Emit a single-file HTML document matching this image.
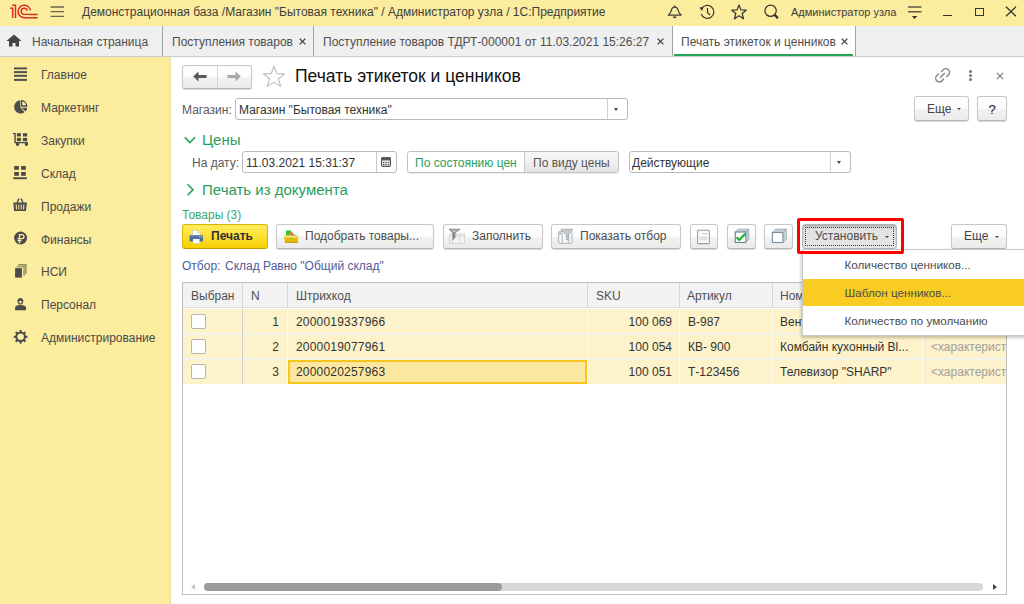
<!DOCTYPE html>
<html><head><meta charset="utf-8">
<style>
*{box-sizing:border-box;margin:0;padding:0}
html,body{width:1024px;height:604px;overflow:hidden;background:#fff;font-family:"Liberation Sans",sans-serif;font-size:12px;color:#4d4d4d;position:relative}
.a{position:absolute}
.t{position:absolute;white-space:nowrap;line-height:14px;font-size:12px}
#titlebar{left:0;top:0;width:1024px;height:26px;background:#fbec9e}
#tabbar{left:0;top:26px;width:1024px;height:31px;background:#efefef;border-bottom:1px solid #c9c9c9}
.tabsep{position:absolute;top:26px;width:1px;height:30px;background:#a3a3a3}
#side{left:0;top:57px;width:171px;height:547px;background:#fbec9e;border-right:1px solid #ece0a0}
.btn{position:absolute;height:24px;border:1px solid #c8c8c8;border-bottom-color:#b4b4b4;border-radius:3px;background:linear-gradient(#ffffff,#fcfcfc 50%,#f1f1f1 54%,#ebebeb);box-shadow:0 1px 1px rgba(0,0,0,.16)}
.inp{position:absolute;height:21px;border:1px solid #b9b9b9;border-radius:3px;background:#fff}
.dd{position:absolute;top:0;width:0;height:0;border-left:3.5px solid transparent;border-right:3.5px solid transparent;border-top:4px solid #444}
.green{color:#2e9e5e}
</style></head><body>

<!-- TITLE BAR -->
<div id="titlebar" class="a"></div>
<svg class="a" style="left:0;top:0" width="44" height="22" viewBox="0 0 44 22">
  <g fill="none" stroke="#dd2a26" stroke-width="1.45">
    <path d="M10.1 8.3 H12.7 V17.9"/>
    <path d="M12.1 5.2 H15.5 V17.9"/>
    <path d="M30.4 10.4 A6.2 6.2 0 1 0 24.3 17.7 H37.6"/>
    <path d="M27.3 10.6 A3.1 3.1 0 1 0 24.3 14.4 H37.6"/>
  </g>
</svg>
<svg class="a" style="left:50px;top:5px" width="15" height="14" viewBox="0 0 15 14">
  <g stroke="#6b6650" stroke-width="1.3"><path d="M0.5 2H14M0.5 6.7H14M0.5 11.4H14"/></g>
</svg>
<div class="t" style="left:82px;top:5px;color:#3e3e3e">Демонстрационная база /Магазин "Бытовая техника" / Администратор узла / 1С:Предприятие</div>

<!-- bell -->
<svg class="a" style="left:664px;top:2px" width="20" height="20" viewBox="0 0 20 20">
  <path d="M4.3 13.1 H17.2 C15.6 11.6 14.6 10.6 14.2 8.6 C13.8 6.2 12.8 5.1 10.75 5.1 C8.7 5.1 7.7 6.2 7.3 8.6 C6.9 10.6 5.9 11.6 4.3 13.1 Z" fill="none" stroke="#3a3a3a" stroke-width="1.15" stroke-linejoin="round"/>
  <path d="M10.75 2.7 L11.8 4.7 H9.7 Z" fill="#3a3a3a"/>
  <path d="M8.7 14.6 H12.8 A2.05 1.7 0 0 1 8.7 14.6 Z" fill="#3a3a3a"/>
</svg>
<!-- history -->
<svg class="a" style="left:699px;top:4px" width="17" height="16" viewBox="0 0 17 16">
  <g fill="none" stroke="#333" stroke-width="1.2"><path d="M2.5 5 A6.5 6.5 0 1 1 2.2 10"/><path d="M8.5 4 V8.5 L11 11"/></g>
  <path d="M0.5 3.5 L4.5 3 L3 7Z" fill="#333"/>
</svg>
<!-- star -->
<svg class="a" style="left:731px;top:4px" width="16" height="16" viewBox="0 0 16 16">
  <path d="M8 1 L10 6 L15.2 6.2 L11.2 9.5 L12.5 14.8 L8 11.8 L3.5 14.8 L4.8 9.5 L0.8 6.2 L6 6Z" fill="none" stroke="#333" stroke-width="1.2" stroke-linejoin="round"/>
</svg>
<!-- search -->
<svg class="a" style="left:763px;top:4px" width="16" height="16" viewBox="0 0 16 16">
  <circle cx="7.6" cy="6.75" r="5.7" fill="none" stroke="#333" stroke-width="1.2"/>
  <path d="M11.9 11 L14.3 13.6" stroke="#333" stroke-width="2.3" stroke-linecap="round"/>
</svg>
<div class="t" style="left:791px;top:4.5px;font-size:11px;color:#3e3e3e">Администратор узла</div>
<!-- filter menu -->
<svg class="a" style="left:902px;top:2px" width="26" height="20" viewBox="0 0 26 20">
  <g stroke="#5d5a48" stroke-width="1.5"><path d="M6 5.1H19.5M6 9.8H19.5"/></g>
  <path d="M9.9 14 H15.3 L12.6 16.9Z" fill="#333"/>
</svg>
<div class="a" style="left:943px;top:14.5px;width:9px;height:1.3px;background:#333"></div>
<div class="a" style="left:975px;top:7.5px;width:9px;height:8.5px;border:1.2px solid #333"></div>
<svg class="a" style="left:1005px;top:6px" width="12" height="11" viewBox="0 0 12 11">
  <path d="M1 0.8 L11 10.2 M11 0.8 L1 10.2" stroke="#333" stroke-width="1.2"/>
</svg>

<!-- TAB BAR -->
<div id="tabbar" class="a"></div>
<div class="a" style="left:672px;top:26px;width:183px;height:30px;background:#fff"></div>
<div class="a" style="left:674px;top:54px;width:179px;height:2px;background:#27a35a"></div>
<div class="tabsep" style="left:162px"></div>
<div class="tabsep" style="left:313px"></div>
<div class="tabsep" style="left:672px"></div>
<div class="tabsep" style="left:855px"></div>
<svg class="a" style="left:6px;top:34px" width="16" height="13" viewBox="0 0 16 13">
  <path d="M8 0.5 L15.5 7 H13 V12.5 H9.5 V9 H6.5 V12.5 H3 V7 H0.5Z" fill="#444"/>
</svg>
<div class="t" style="left:32px;top:35px">Начальная страница</div>
<div class="t" style="left:172px;top:35px">Поступления товаров</div>
<svg class="a" style="left:299.1px;top:37.7px" width="7" height="7" viewBox="0 0 7 7"><path d="M0.6 0.6 L6.4 6.4 M6.4 0.6 L0.6 6.4" stroke="#404040" stroke-width="1.3"/></svg>
<div class="t" style="left:323px;top:35px">Поступление товаров ТДРТ-000001 от 11.03.2021 15:26:27</div>
<svg class="a" style="left:656.5px;top:37.7px" width="7" height="7" viewBox="0 0 7 7"><path d="M0.6 0.6 L6.4 6.4 M6.4 0.6 L0.6 6.4" stroke="#404040" stroke-width="1.3"/></svg>
<div class="t" style="left:681px;top:35px">Печать этикеток и ценников</div>
<svg class="a" style="left:841.0px;top:37.7px" width="7" height="7" viewBox="0 0 7 7"><path d="M0.6 0.6 L6.4 6.4 M6.4 0.6 L0.6 6.4" stroke="#404040" stroke-width="1.3"/></svg>

<!-- SIDEBAR -->
<div id="side" class="a"></div>
<div id="sideitems">
<svg class="a" style="left:10px;top:62px" width="22" height="22" viewBox="0 0 22 22"><g fill="#505050"><rect x="4" y="5.4" width="13" height="2"/><rect x="4" y="9.1" width="13" height="2"/><rect x="4" y="12.8" width="13" height="2"/><rect x="4" y="16.9" width="13" height="2"/></g></svg>
<div class="t" style="left:41px;top:68px;color:#4a4a4a">Главное</div>
<svg class="a" style="left:10px;top:96px" width="22" height="22" viewBox="0 0 22 22"><path d="M10.3 11.2 V4.3 A6.6 6.6 0 1 0 14.6 16.2 Z" fill="#4e4e4e"/><path d="M11.5 11.8 L15.6 15.6 A6.2 6.2 0 0 0 17.2 11.8 Z" fill="#4e4e4e"/><path d="M11.6 4.6 V10.0 H16.7 A5.6 5.6 0 0 0 11.6 4.6 Z" fill="none" stroke="#4e4e4e" stroke-width="1.3"/></svg>
<div class="t" style="left:41px;top:101px;color:#4a4a4a">Маркетинг</div>
<svg class="a" style="left:10px;top:129px" width="22" height="22" viewBox="0 0 22 22"><g fill="#4a4a4a"><path d="M3 3.9 H5.8 V12.9 H18 V14.3 H4.4 V5.3 H3Z"/><rect x="6.9" y="4.2" width="4" height="3.3"/><rect x="12.9" y="4.2" width="4.2" height="3.3"/><rect x="6.9" y="8.9" width="4" height="3.3"/><rect x="12.9" y="8.9" width="4.2" height="3.3"/><path d="M6 14 H9.1 V15.8 A1.55 1.2 0 0 1 6 15.8Z"/><path d="M14.9 14 H18 V15.8 A1.55 1.2 0 0 1 14.9 15.8Z"/></g></svg>
<div class="t" style="left:41px;top:134px;color:#4a4a4a">Закупки</div>
<svg class="a" style="left:10px;top:162px" width="22" height="22" viewBox="0 0 22 22"><g fill="#4a4a4a"><rect x="4.2" y="4" width="4.7" height="3.8"/><rect x="11.1" y="4" width="4.7" height="3.8"/><rect x="4.2" y="10" width="4.7" height="3.8"/><rect x="11.1" y="10" width="4.7" height="3.8"/><rect x="3.2" y="15.3" width="13.7" height="1.9"/></g></svg>
<div class="t" style="left:41px;top:167px;color:#4a4a4a">Склад</div>
<svg class="a" style="left:10px;top:195px" width="22" height="22" viewBox="0 0 22 22"><path d="M3.3 7.6 H16.9 L16 16 H4.1Z M5.6 9.4 L6 14.5 H7 L6.8 9.4Z M8.3 9.4 V14.5 H9.3 V9.4Z M10.8 9.4 V14.5 H11.8 V9.4Z M13.3 9.4 L13.1 14.5 H14.1 L14.5 9.4Z" fill="#4a4a4a" fill-rule="evenodd"/><path d="M7 7.8 L9 3.6 M13 7.8 L11.1 3.6" stroke="#4a4a4a" stroke-width="1.4"/></svg>
<div class="t" style="left:41px;top:200px;color:#4a4a4a">Продажи</div>
<svg class="a" style="left:10px;top:228px" width="22" height="22" viewBox="0 0 22 22"><circle cx="10.6" cy="10" r="6.5" fill="#4a4a4a"/><path d="M9.5 15.3 V6.6 H12 A2 2 0 0 1 12 10.6 H7.5 M7.5 12.6 H11.5" fill="none" stroke="#fbec9e" stroke-width="1.3"/></svg>
<div class="t" style="left:41px;top:233px;color:#4a4a4a">Финансы</div>
<svg class="a" style="left:10px;top:261px" width="22" height="22" viewBox="0 0 22 22"><g fill="#8d8762"><path d="M8.3 3.1 H16.6 V12.7 H15.2 V4.5 H8.3Z"/><path d="M6.7 4.9 H14.8 V14.8 H13.3 V6.3 H6.7Z" fill="#9a9468"/></g><rect x="5.1" y="7.1" width="6.8" height="9.5" fill="#4a4a4a"/></svg>
<div class="t" style="left:41px;top:265px;color:#4a4a4a">НСИ</div>
<svg class="a" style="left:10px;top:294px" width="22" height="22" viewBox="0 0 22 22"><path d="M7.6 6.3 A2.9 3 0 0 1 13.2 6.3 V7.5 C13.2 9.5 12 10.6 10.4 10.6 C8.8 10.6 7.6 9.5 7.6 7.5Z" fill="#4a4a4a"/><path d="M9 7.2 Q10.4 6.3 11.8 7.2 Q11.6 9.5 10.4 9.5 Q9.2 9.5 9 7.2Z" fill="#fbec9e"/><path d="M5.1 13.3 Q5.3 11 10.5 10.9 Q15.8 11 16 13.3 V16.2 H5.1Z" fill="#4a4a4a"/></svg>
<div class="t" style="left:41px;top:298px;color:#4a4a4a">Персонал</div>
<svg class="a" style="left:10px;top:327px" width="22" height="22" viewBox="0 0 22 22"><g transform="translate(10.6 9.8)"><circle r="4.3" fill="none" stroke="#4a4a4a" stroke-width="2"/><rect x="-1" y="-6.9" width="2" height="3" rx="0.6" fill="#4a4a4a" transform="rotate(0)"/><rect x="-1" y="-6.9" width="2" height="3" rx="0.6" fill="#4a4a4a" transform="rotate(45)"/><rect x="-1" y="-6.9" width="2" height="3" rx="0.6" fill="#4a4a4a" transform="rotate(90)"/><rect x="-1" y="-6.9" width="2" height="3" rx="0.6" fill="#4a4a4a" transform="rotate(135)"/><rect x="-1" y="-6.9" width="2" height="3" rx="0.6" fill="#4a4a4a" transform="rotate(180)"/><rect x="-1" y="-6.9" width="2" height="3" rx="0.6" fill="#4a4a4a" transform="rotate(225)"/><rect x="-1" y="-6.9" width="2" height="3" rx="0.6" fill="#4a4a4a" transform="rotate(270)"/><rect x="-1" y="-6.9" width="2" height="3" rx="0.6" fill="#4a4a4a" transform="rotate(315)"/></g></svg>
<div class="t" style="left:41px;top:331px;color:#4a4a4a">Администрирование</div>
</div>

<!-- FORM -->
<div id="form">
<!-- nav buttons -->
<div class="btn" style="left:182px;top:65px;width:70px;height:24px"></div>
<div class="a" style="left:217px;top:66px;width:1px;height:22px;background:#d4d4d4"></div>
<svg class="a" style="left:192px;top:70px" width="16" height="13" viewBox="0 0 16 13">
  <path d="M1.2 6.5 L6.5 1.5 V4.9 H14.6 V8.1 H6.5 V11.5Z" fill="#585858"/>
</svg>
<svg class="a" style="left:226px;top:70px" width="16" height="13" viewBox="0 0 16 13">
  <path d="M14.8 6.5 L9.5 1.5 V4.9 H1.4 V8.1 H9.5 V11.5Z" fill="#a8a8a8"/>
</svg>
<svg class="a" style="left:262px;top:65px" width="24" height="23" viewBox="0 0 24 23">
  <path d="M12 1.3 L14.8 8.6 L22.6 8.9 L16.5 13.8 L18.6 21.4 L12 17.1 L5.4 21.4 L7.5 13.8 L1.4 8.9 L9.2 8.6Z" fill="none" stroke="#b6bec6" stroke-width="1.1" stroke-linejoin="round"/>
</svg>
<div class="a" style="left:295px;top:66px;font-size:17.5px;line-height:20px;white-space:nowrap;color:#111">Печать этикеток и ценников</div>

<!-- link / dots / close -->
<svg class="a" style="left:930px;top:64px" width="26" height="24" viewBox="0 0 26 24">
  <g fill="none" stroke="#8c8c8c" stroke-width="1.5" stroke-linecap="round">
    <path d="M11.65 7.45 L13.35 5.75 A3.6 3.6 0 0 1 18.45 10.85 L16.75 12.55"/>
    <path d="M8.45 10.05 L6.75 11.75 A3.6 3.6 0 0 0 11.85 16.85 L13.55 15.15"/>
    <path d="M10.3 13.5 L14.5 9.4"/>
  </g>
</svg>
<div class="a" style="left:969px;top:69.5px;width:3px;height:3px;border-radius:50%;background:#777"></div>
<div class="a" style="left:969px;top:73.5px;width:3px;height:3px;border-radius:50%;background:#777"></div>
<div class="a" style="left:969px;top:77.5px;width:3px;height:3px;border-radius:50%;background:#777"></div>
<svg class="a" style="left:996px;top:72px" width="8" height="8" viewBox="0 0 8 8">
  <path d="M0.8 0.8 L7.2 7.2 M7.2 0.8 L0.8 7.2" stroke="#777" stroke-width="1.1"/>
</svg>

<!-- Магазин -->
<div class="t" style="left:182px;top:103px;color:#5a5a5a">Магазин:</div>
<div class="inp" style="left:235px;top:98px;width:393px;height:22px"></div>
<div class="a" style="left:607px;top:99px;width:1px;height:20px;background:#d0d0d0"></div>
<div class="dd" style="left:614px;top:108px;border-left-width:2.7px;border-right-width:2.7px;border-top-width:3.2px"></div>
<div class="t" style="left:239px;top:103px;color:#333">Магазин "Бытовая техника"</div>

<div class="btn" style="left:914px;top:96px;width:55px;height:25px"></div>
<div class="t" style="left:927px;top:102px;color:#444">Еще</div>
<div class="dd" style="left:957.2px;top:107.5px;border-left-width:2.5px;border-right-width:2.5px;border-top-width:2.6px"></div>
<div class="btn" style="left:977px;top:96px;width:30px;height:25px"></div>
<div class="t" style="left:988.5px;top:101.5px;color:#2a2a2a;font-size:13px;line-height:16px;-webkit-text-stroke:0.15px #2a2a2a">?</div>

<!-- Цены -->
<svg class="a" style="left:184px;top:134px" width="14" height="11" viewBox="0 0 14 11">
  <path d="M0.7 3.3 L5.9 8.5 L11.1 3.3" fill="none" stroke="#22a055" stroke-width="1.6"/>
</svg>
<div class="a" style="left:202px;top:131px;font-size:15px;line-height:17px;white-space:nowrap;color:#2a9d5c">Цены</div>
<div class="t" style="left:192px;top:156px;color:#5a5a5a">На дату:</div>
<div class="inp" style="left:242px;top:151px;width:155px;height:22px"></div>
<div class="a" style="left:376px;top:152px;width:1px;height:20px;background:#c8c8c8"></div>
<svg class="a" style="left:381px;top:157px" width="10" height="10" viewBox="0 0 10 10">
  <rect x="0.6" y="0.6" width="8.8" height="8.8" rx="1.3" fill="#fff" stroke="#5a5a5a" stroke-width="1.2"/>
  <path d="M0 1.6 A1.6 1.6 0 0 1 1.6 0 H8.4 A1.6 1.6 0 0 1 10 1.6 V3.6 H0Z" fill="#5a5a5a"/>
  <g fill="#5a5a5a"><rect x="2" y="4.8" width="1.5" height="1.3"/><rect x="4.3" y="4.8" width="1.5" height="1.3"/><rect x="6.6" y="4.8" width="1.5" height="1.3"/>
  <rect x="2" y="6.9" width="1.5" height="1.3"/><rect x="4.3" y="6.9" width="1.5" height="1.3"/><rect x="6.6" y="6.9" width="1.5" height="1.3"/></g>
</svg>
<div class="t" style="left:246px;top:156px;color:#333">11.03.2021 15:31:37</div>

<div class="a" style="left:407px;top:151px;width:212px;height:22px;border:1px solid #c2c2c2;border-radius:3px;background:#fff;box-shadow:0 1px 0 rgba(0,0,0,.08)"></div>
<div class="a" style="left:524px;top:152px;width:94px;height:20px;border-left:1px solid #c8c8c8;border-radius:0 2px 2px 0;background:linear-gradient(#f7f7f7,#f0f0f0 50%,#e4e4e4)"></div>
<div class="t" style="left:415px;top:156px;color:#2a9d5c">По состоянию цен</div>
<div class="t" style="left:533px;top:156px;color:#555">По виду цены</div>

<div class="inp" style="left:629px;top:151px;width:222px;height:22px"></div>
<div class="a" style="left:830px;top:152px;width:1px;height:20px;background:#d0d0d0"></div>
<div class="dd" style="left:837px;top:160.5px;border-left-width:2.7px;border-right-width:2.7px;border-top-width:3.2px"></div>
<div class="t" style="left:632px;top:156px;color:#333">Действующие</div>

<svg class="a" style="left:184px;top:182px" width="11" height="15" viewBox="0 0 11 15">
  <path d="M3.6 2.3 L9 7.7 L3.6 13.1" fill="none" stroke="#22a055" stroke-width="1.6"/>
</svg>
<div class="a" style="left:202px;top:181px;font-size:15px;line-height:17px;white-space:nowrap;color:#2a9d5c">Печать из документа</div>

<div class="t" style="left:182px;top:208px;color:#3aa673">Товары (3)</div>

<!-- toolbar -->
<div class="a" style="left:182px;top:224px;width:86px;height:25px;border:1px solid #d9b400;border-bottom-color:#c49e00;border-radius:3px;background:linear-gradient(#ffec5c,#fde032 50%,#f5cf00)"></div>
<svg class="a" style="left:184px;top:224px" width="24" height="24" viewBox="0 0 24 24">
  <path d="M8.5 6.2 H14 L15.9 8.1 V11.8 H8.5Z" fill="#fff" stroke="#b8b8a8" stroke-width="0.5"/>
  <path d="M13.2 6.6 L15.5 8.9 H13.2Z" fill="#d8d0a0"/>
  <rect x="5.6" y="11.3" width="13.4" height="6.3" rx="1.3" fill="#4b6a99"/>
  <rect x="5.6" y="11.3" width="13.4" height="1.2" rx="0.6" fill="#6a88b5"/>
  <circle cx="15.6" cy="12.9" r="0.55" fill="#c8d4e6"/><circle cx="17.3" cy="12.9" r="0.55" fill="#c8d4e6"/>
  <rect x="9" y="15" width="6.6" height="4.4" fill="#fff" stroke="#b0b8c8" stroke-width="0.4"/>
</svg>
<div class="t" style="left:211px;top:229px;color:#333;font-weight:bold">Печать</div>

<div class="btn" style="left:276px;top:224px;width:158px;height:25px"></div>
<svg class="a" style="left:283px;top:228px" width="16" height="16" viewBox="0 0 16 16">
  <rect x="3" y="2.5" width="5.1" height="5.5" fill="#2fc03a"/>
  <path d="M5.6 5 L9.6 3.9 L10.6 7.6 L6.2 8.6Z" fill="#f0782a"/>
  <rect x="7.3" y="6.6" width="5.4" height="2.3" rx="1" fill="#3a78e0"/>
  <path d="M0.8 7.6 H15.6 L14.6 15 H2Z" fill="#e2bd10"/>
  <path d="M0.8 7.6 H15.6 L15.3 9.6 H1.2Z" fill="#f6e27a"/>
  <rect x="2" y="13.6" width="12.6" height="1.4" fill="#c9a200"/>
</svg>
<div class="t" style="left:305px;top:229px;color:#4d4d4d">Подобрать товары...</div>

<div class="btn" style="left:443px;top:224px;width:100px;height:25px"></div>
<svg class="a" style="left:448px;top:227px" width="18" height="18" viewBox="0 0 18 18">
  <rect x="1.4" y="7" width="15" height="9.6" fill="#f3f3f3" stroke="#d4d4d4" stroke-width="0.9"/>
  <path d="M1.4 8.9 H16.4 M4.3 7 V16.6 M11.5 7 V16.6" stroke="#d6d6d6" stroke-width="0.9"/>
  <path d="M1 2 H12 L11.2 3.2 L7.2 5.8 V10.5 L4.6 13.2 V5.8 L1.8 3.2Z" fill="#8f8f8f" stroke="#888" stroke-width="0.5" stroke-linejoin="round"/>
  <path d="M2.5 2.8 H10.5 L7 5 H5Z" fill="#bdbdbd"/>
</svg>
<div class="t" style="left:472px;top:229px;color:#4d4d4d">Заполнить</div>

<div class="btn" style="left:551px;top:224px;width:130px;height:25px"></div>
<svg class="a" style="left:552px;top:224px" width="24" height="24" viewBox="0 0 24 24">
  <rect x="6.6" y="7.3" width="13.4" height="12" rx="1.3" fill="#f5f7f8" stroke="#aab3b9" stroke-width="1"/>
  <path d="M7 9.3 H9.8" stroke="#aab3b9" stroke-width="1.6"/>
  <path d="M10.4 9 V19 M16.6 10 V19" stroke="#b8c0c5" stroke-width="0.9"/>
  <path d="M9.5 11 V17 M18.5 12 V17" stroke="#c8cfd3" stroke-width="0.8" stroke-dasharray="1 1.3"/>
  <path d="M9 5.2 H20.6 L20 6.6 L16.3 10.8 V16.4 L14.5 15.6 V10.8 L9.6 6.6Z" fill="#c3cacf" stroke="#98a2a8" stroke-width="0.7" stroke-linejoin="round"/>
</svg>
<div class="t" style="left:580px;top:229px;color:#4d4d4d">Показать отбор</div>

<div class="btn" style="left:690px;top:224px;width:28px;height:25px"></div>
<svg class="a" style="left:696px;top:229px" width="15" height="16" viewBox="0 0 15 16">
  <rect x="1.6" y="1.2" width="11.8" height="13.4" rx="0.8" fill="#fafafa" stroke="#9d9dac" stroke-width="1.1"/>
  <path d="M6.5 4.7 H11.5" stroke="#c9d0dc" stroke-width="1.3"/>
  <path d="M3.5 8.4 H11.5 M3.5 10.2 H11.5" stroke="#c4ccd8" stroke-width="0.9"/>
</svg>
<div class="btn" style="left:727px;top:224px;width:29px;height:25px"></div>
<svg class="a" style="left:733px;top:228px" width="18" height="17" viewBox="0 0 18 17">
  <path d="M2.3 4 L5.3 1.2 H15.8 V11.2 L12.8 14.5 H2.3Z" fill="#c6d2d8" stroke="#8fa3ae" stroke-width="0.8" stroke-linejoin="round"/>
  <path d="M12.8 4 L15.8 1.2" stroke="#8fa3ae" stroke-width="0.7"/>
  <rect x="2.3" y="4" width="10.5" height="10.5" fill="#fff" stroke="#6e8594" stroke-width="1.1"/>
  <path d="M3.6 9.2 L6.3 12 L12.2 5.8" fill="none" stroke="#1eae2e" stroke-width="2.2"/>
</svg>
<div class="btn" style="left:764px;top:224px;width:29px;height:25px"></div>
<svg class="a" style="left:771px;top:228px" width="18" height="17" viewBox="0 0 18 17">
  <path d="M1.4 4.5 L4.6 1.2 H15.3 V11.2 L11.9 14.5 H1.4Z" fill="#c6d2d8" stroke="#8fa3ae" stroke-width="0.8" stroke-linejoin="round"/>
  <path d="M11.9 4.5 L15.3 1.2" stroke="#8fa3ae" stroke-width="0.7"/>
  <rect x="1.4" y="4.5" width="10.5" height="10" fill="#fff" stroke="#7890a0" stroke-width="1.1"/>
</svg>

<!-- Установить pressed -->
<div class="a" style="left:802px;top:224px;width:95px;height:25px;border:1px solid #b4b4b4;border-radius:3px;background:linear-gradient(#cfcfcf,#e2e2e2 25%,#e6e6e6);box-shadow:inset 0 1px 2px rgba(0,0,0,.2)"></div>
<div class="a" style="left:805px;top:227px;width:89px;height:19px;border:1px dotted #3a3a3a"></div>
<div class="t" style="left:815px;top:229px;color:#4d4d4d">Установить</div>
<div class="dd" style="left:884.5px;top:235.5px;border-left-width:2.5px;border-right-width:2.5px;border-top-width:2.6px"></div>

<div class="btn" style="left:951px;top:224px;width:56px;height:25px"></div>
<div class="t" style="left:964px;top:229px;color:#444">Еще</div>
<div class="dd" style="left:995px;top:235.5px;border-left-width:2.5px;border-right-width:2.5px;border-top-width:2.6px"></div>

<div class="t" style="left:182px;top:259px;color:#4f5b9a">Отбор:</div><div class="t" style="left:225px;top:259px;color:#4f5b9a">Склад Равно "Общий склад"</div>

<!-- TABLE -->
<div class="a" style="left:182px;top:282px;width:825px;height:313px;border:1px solid #bdbdbd;background:#fff"></div>
<div class="a" style="left:183px;top:283px;width:823px;height:25px;background:#f2f2f2;border-bottom:1px solid #dedede"></div>
<div class="a" style="left:242px;top:283px;width:1px;height:25px;background:#d6d6d6"></div>
<div class="a" style="left:287px;top:283px;width:1px;height:25px;background:#d6d6d6"></div>
<div class="a" style="left:587px;top:283px;width:1px;height:25px;background:#d6d6d6"></div>
<div class="a" style="left:679px;top:283px;width:1px;height:25px;background:#d6d6d6"></div>
<div class="a" style="left:772px;top:283px;width:1px;height:25px;background:#d6d6d6"></div>
<div class="a" style="left:922px;top:283px;width:1px;height:25px;background:#d6d6d6"></div>
<div class="t" style="left:191px;top:289px;color:#505050">Выбран</div>
<div class="t" style="left:251px;top:289px;color:#505050">N</div>
<div class="t" style="left:296px;top:289px;color:#505050">Штрихкод</div>
<div class="t" style="left:596px;top:289px;color:#505050">SKU</div>
<div class="t" style="left:687px;top:289px;color:#505050">Артикул</div>
<div class="t" style="left:780px;top:289px;color:#505050">Номенклатура</div>

<div class="a" style="left:183px;top:309px;width:823px;height:75px;background:#fdf2c9"></div>
<div class="a" style="left:183px;top:333px;width:823px;height:2px;background:#f3f2ec"></div>
<div class="a" style="left:183px;top:358px;width:823px;height:2px;background:#f3f2ec"></div>
<div class="a" style="left:242px;top:309px;width:1px;height:75px;background:#cfcfcf"></div>
<div class="a" style="left:287px;top:309px;width:1px;height:75px;background:#fffaf0"></div>
<div class="a" style="left:587px;top:309px;width:1px;height:75px;background:#fffaf0"></div>
<div class="a" style="left:679px;top:309px;width:1px;height:75px;background:#fffaf0"></div>
<div class="a" style="left:772px;top:309px;width:1px;height:75px;background:#fffaf0"></div>
<div class="a" style="left:922px;top:309px;width:1px;height:75px;background:#fffaf0"></div>
<div class="a" style="left:288px;top:360px;width:299px;height:24px;background:#fce7a0;border:2px solid #f5c51c"></div>
<div class="a" style="left:191px;top:314px;width:15px;height:15px;border:1px solid #b5b5b5;border-radius:2px;background:#fff"></div>
<div class="t" style="left:243px;top:315px;width:36px;text-align:right;color:#333">1</div>
<div class="t" style="left:296px;top:315px;color:#333;letter-spacing:0.2px">2000019337966</div>
<div class="t" style="left:590px;top:315px;width:82px;text-align:right;color:#333">100 069</div>
<div class="t" style="left:688px;top:315px;color:#333">В-987</div>
<div class="t" style="left:780px;top:315px;color:#333">Вентилятор</div>
<div class="t" style="left:931px;top:315px;width:75px;overflow:hidden;color:#a0a0a0">&lt;характеристика&gt;</div>
<div class="a" style="left:191px;top:339px;width:15px;height:15px;border:1px solid #b5b5b5;border-radius:2px;background:#fff"></div>
<div class="t" style="left:243px;top:340px;width:36px;text-align:right;color:#333">2</div>
<div class="t" style="left:296px;top:340px;color:#333;letter-spacing:0.2px">2000019077961</div>
<div class="t" style="left:590px;top:340px;width:82px;text-align:right;color:#333">100 054</div>
<div class="t" style="left:688px;top:340px;color:#333">КВ- 900</div>
<div class="t" style="left:780px;top:340px;color:#333">Комбайн кухонный Bl...</div>
<div class="t" style="left:931px;top:340px;width:75px;overflow:hidden;color:#a0a0a0">&lt;характеристика&gt;</div>
<div class="a" style="left:191px;top:364px;width:15px;height:15px;border:1px solid #b5b5b5;border-radius:2px;background:#fff"></div>
<div class="t" style="left:243px;top:365px;width:36px;text-align:right;color:#333">3</div>
<div class="t" style="left:296px;top:365px;color:#333;letter-spacing:0.2px">2000020257963</div>
<div class="t" style="left:590px;top:365px;width:82px;text-align:right;color:#333">100 051</div>
<div class="t" style="left:688px;top:365px;color:#333">Т-123456</div>
<div class="t" style="left:780px;top:365px;color:#333">Телевизор "SHARP"</div>
<div class="t" style="left:931px;top:365px;width:75px;overflow:hidden;color:#a0a0a0">&lt;характеристика&gt;</div>


<!-- scrollbar -->
<div class="a" style="left:204px;top:583px;width:779px;height:8px;border-radius:4px;background:#d7d7d7"></div>
<div class="a" style="left:204px;top:583px;width:298px;height:8px;border-radius:4px;background:#9c9c9c"></div>
<div class="a" style="left:191px;top:584px;width:0;height:0;border-top:3px solid transparent;border-bottom:3px solid transparent;border-right:4px solid #c8c8c8"></div>
<div class="a" style="left:993px;top:584px;width:0;height:0;border-top:3px solid transparent;border-bottom:3px solid transparent;border-left:4px solid #444"></div>

<!-- POPUP -->
<div class="a" style="left:802px;top:249px;width:230px;height:87px;background:#fff;border:1px solid #c8c8c8;box-shadow:-1px 2px 3px rgba(0,0,0,.22)"></div>
<div class="a" style="left:803px;top:279px;width:221px;height:27px;background:#f8cc22"></div>
<div class="t" style="left:844.5px;font-size:11.7px;top:258px;color:#4d4d4d">Количество ценников...</div>
<div class="t" style="left:844.5px;font-size:11.7px;top:286px;color:#4d4d4d">Шаблон ценников...</div>
<div class="t" style="left:844.5px;font-size:11.7px;top:314px;color:#4d4d4d">Количество по умолчанию</div>

<!-- red highlight -->
<div class="a" style="left:797px;top:218px;width:107px;height:36px;border:3.5px solid #ff0000;border-radius:2px"></div>
</div>

</body></html>
